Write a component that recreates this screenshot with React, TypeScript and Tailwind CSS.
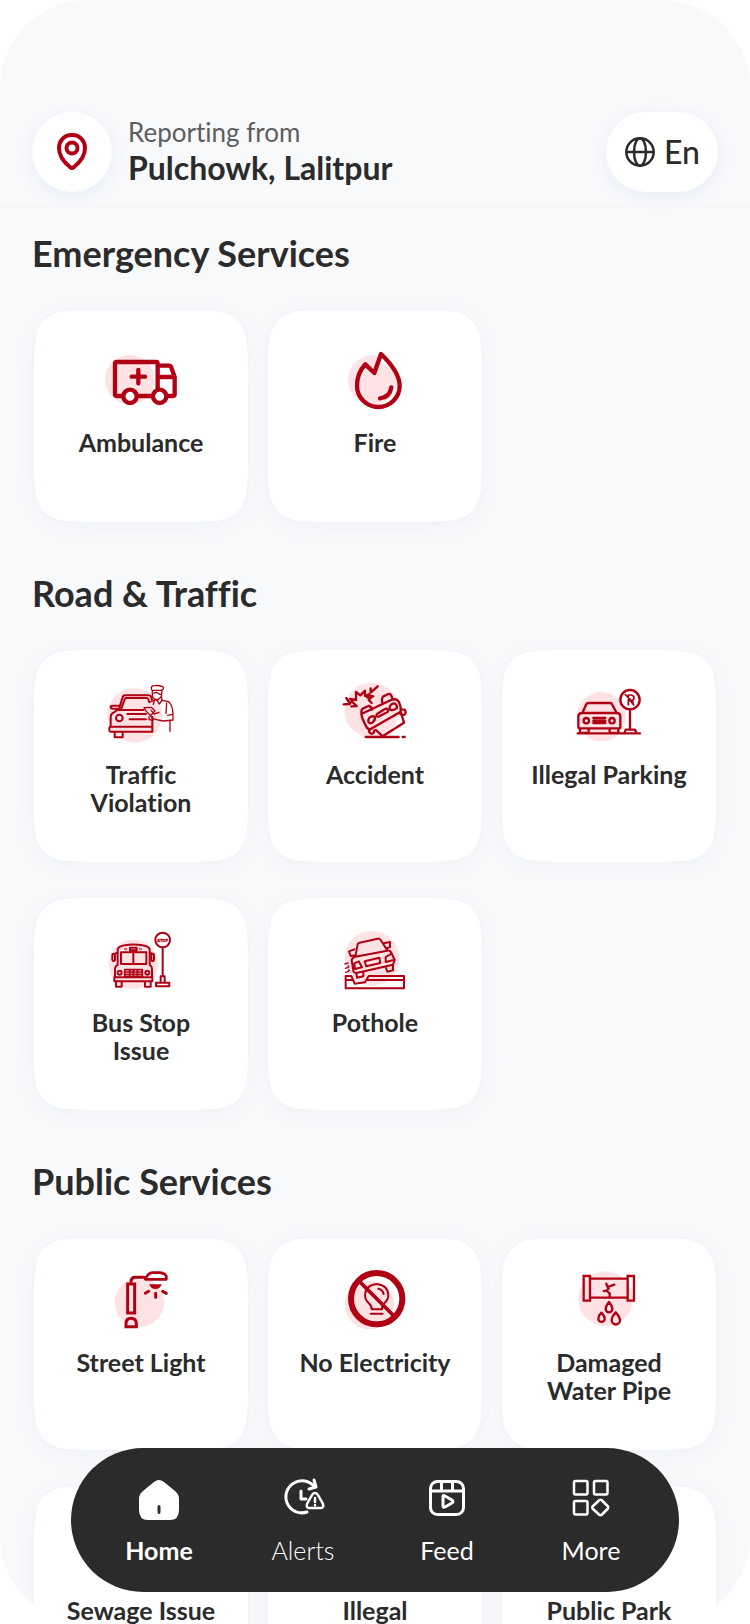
import React from 'react';
import { Droplets, Trash2, Trees } from 'lucide-react';

interface IconProps {
  viewBox: string;
  circle: [number, number, number];
  large?: boolean;
  width?: number;
  children: React.ReactNode;
}

const ServiceIcon: React.FC<IconProps> = ({ viewBox, circle, large, width = 7, children }) => (
  <svg
    viewBox={viewBox}
    className={large ? 'size-[72px] overflow-visible' : 'size-16 overflow-visible'}
    fill="none"
    stroke="#b00014"
    strokeWidth={width}
    strokeLinecap="round"
    strokeLinejoin="round"
    aria-hidden="true"
  >
    <circle cx={circle[0]} cy={circle[1]} r={circle[2]} fill="#ffe2e4" stroke="none" />
    {children}
  </svg>
);

const AmbulanceIcon = () => (
  <ServiceIcon viewBox="255 132 216 216" circle={[329, 239, 74]} large width={13}>
    <path d="M306 288H290Q285 288 285 283V191Q285 186 290 186H408Q413 186 413 191V268M350 288H397M440 288H459Q464 288 464 283V231L453 200Q451 197 447 197H413M413 231H464M355 210V250M335 230H375" />
    <circle cx="330" cy="289" r="20" fill="#fff" />
    <circle cx="419" cy="289" r="20" fill="#fff" />
  </ServiceIcon>
);

const FireIcon = () => (
  <ServiceIcon viewBox="957 132 216 216" circle={[1058, 240, 74]} large width={13}>
    <path d="M1083 162L1063 219L1036 193C1024 206 1011 228 1011 257A64 64 0 0 0 1139 257C1139 225 1112 190 1083 162Z" fill="#fff" stroke="none" />
    <path d="M1063 219L1036 193C1024 206 1011 228 1011 257A64 64 0 0 0 1060 314A74 74 0 0 0 1132 240Q1128 200 1072 187Z" fill="#ffe2e4" stroke="none" />
    <path d="M1083 162L1063 219L1036 193C1024 206 1011 228 1011 257A64 64 0 0 0 1139 257C1139 225 1112 190 1083 162Z" />
    <path d="M1114 262C1111 280 1099 293 1080 295" />
  </ServiceIcon>
);

const TrafficIcon = () => (
  <ServiceIcon viewBox="57 42 192 192" circle={[134, 136, 82]} width={6}>
    <path d="M86 119L99 79Q101 76 106 76H176Q182 76 184 82L186 90M93 118L105 86Q106 84 110 84H170Q174 84 176 90L178 97M82 120H161M82 120L66 131Q62 134 62 141V169M81 116H68Q62 116 62 111Q62 107 68 107H86M112 132H168M119 148H168M187 140V184M62 170H187M62 170Q58 170 58 175V181Q58 185 63 185H187M74 187V202H98V187" />
    <circle cx="88" cy="144" r="10" />
    <g strokeWidth="4">
      <path d="M162 113L184 112L195 123L181 137L168 123ZM183 121L193 132L207 127M181 137Q187 147 199 149L220 153L249 150V132Q248 105 236 95L217 91M180 96L204 87M230 99L228 130M233 136L249 133M177 140V149L189 151M240 152V184" />
      <path d="M184 53Q184 48 193 47Q206 45 218 50Q222 52 220 57L215 61H187Q184 60 184 53ZM187 61V78Q188 84 192 86L202 92L214 79L216 61M192 69L201 67L208 73L213 73M202 92L208 102L216 91L214 79M194 87L190 103" />
    </g>
  </ServiceIcon>
);

const AccidentIcon = () => (
  <ServiceIcon viewBox="69 42 192 192" circle={[155, 121, 82]}>
    <path d="M71 103L88 102M79 84L90 101M88 102L98 92L90 87L108 90L108 66L121 76L135 62L135 78L147 73M94 109L110 108L99 98M152 55V68L173 49M141 82L156 80L146 90L155 99M150 77L160 79" />
    <path d="M124 132L213 90Q229 83 237 96Q244 111 242 125L152 177Q143 180 136 164L128 147Q125 138 124 132ZM125 132Q122 118 130 115L145 108Q152 107 156 119M188 101Q183 85 190 79L205 72Q213 69 218 87M243 118L254 119Q259 126 255 132Q250 138 241 132M242 125L252 158L188 199L168 180M154 176Q145 180 148 187Q155 195 161 188L163 181" />
    <path d="M148 143Q157 136 165 141Q166 151 158 157Q151 163 146 157Q143 149 148 143ZM172 131L195 117Q201 114 203 119Q206 124 201 127L178 139Q172 141 170 137Q168 134 172 131ZM209 112Q211 101 223 100Q232 105 231 114Q221 123 211 119Q208 117 209 112ZM137 201H236M248 201H254" />
  </ServiceIcon>
);

const ParkingIcon = () => (
  <ServiceIcon viewBox="51 42 192 192" circle={[124, 140, 74]}>
    <path d="M53 190H240M67 129L78 104Q81 99 86 99H150Q155 99 157 104L170 129M55 140Q55 129 67 129H170Q181 129 181 140V170Q181 175 176 175H60Q55 175 55 170ZM60 177V189H86V177M149 177V189H175V177M100 144H136M100 152H136M100 159H136M210 118V176M194 188L197 179H225L229 188" />
    <circle cx="79" cy="152" r="8" />
    <circle cx="156" cy="152" r="8" />
    <circle cx="210" cy="89" r="29" fill="#fff" />
    <path strokeWidth="5" d="M205 105V75H213Q222 76 222 84Q222 91 213 92H205M212 93L221 105M196 74L220 98" />
  </ServiceIcon>
);

const BusIcon = () => (
  <ServiceIcon viewBox="57 36 192 192" circle={[130, 133, 74]} width={6}>
    <path d="M83 135V88Q86 79 104 76Q130 71 157 76Q176 79 179 88V135M93 132V97H169V132ZM130 98V130M83 135Q75 137 75 150V171M179 135Q186 137 186 150V171M73 172H187V184H73ZM78 187V200H95V187M165 187V200H182V187M83 98L75 101M179 98L187 101M120 83H140V91H120Z" />
    <rect x="67" y="101" width="8" height="22" rx="4" />
    <rect x="184" y="101" width="8" height="22" rx="4" />
    <circle cx="89" cy="158" r="6" />
    <circle cx="172" cy="158" r="6" />
    <circle cx="107" cy="87" r="1" />
    <circle cx="151" cy="87" r="1" />
    <path strokeWidth="5" d="M104 149H157V170H104ZM106 156H156M106 163H156M119 150V169M130 150V169M142 150V169" />
    <path d="M218 83V166M212 185V169H224V185M198 188H238V199H198Z" />
    <circle cx="218" cy="60" r="22" fill="#fff" />
    <text x="218" y="65" textAnchor="middle" fontSize="12" fontWeight="700" fill="#b00014" stroke="#b00014" strokeWidth="1" fontFamily="Liberation Sans, sans-serif">STOP</text>
  </ServiceIcon>
);

const PotholeIcon = () => (
  <ServiceIcon viewBox="69 36 192 192" circle={[156, 115, 82]} width={6}>
    <path d="M106 110L113 73Q114 69 119 68L173 56Q178 55 182 60L202 91M95 120Q97 112 106 110L202 92Q210 91 213 96L224 120L219 134L109 159Q102 160 100 153ZM103 88L87 94L92 108L106 106M191 70L210 66V81L200 85M134 124L178 113L181 129L139 139ZM103 130L116 124L126 142L105 147ZM211 103L197 111L197 126L218 121M109 159L111 173L130 169L130 157M197 141L202 155L219 151V135" />
    <path d="M78 168H94L104 191L135 187L146 168H252V205H77V168M78 180H98M141 180H250" />
    <path strokeWidth="4" d="M75 132L84 129M76 145L85 142M77 157L86 154M84 138L87 139M85 150L88 151" />
  </ServiceIcon>
);

const StreetLightIcon = () => (
  <ServiceIcon viewBox="57 51 192 192" circle={[148, 142, 74]}>
    <path strokeLinejoin="miter" strokeWidth="9" d="M113 87H134V174H113Z" />
    <path strokeWidth="9" d="M123 80Q124 67 135 67H162" />
    <path strokeWidth="8" d="M166 72Q174 54 187 53H210Q225 55 229 64V73H166Z" fill="#fff" />
    <path strokeWidth="9" strokeLinejoin="miter" d="M108 215V205Q109 190 123 190Q138 190 139 205V215Z" />
    <path d="M178 88H215Q211 102 196 102Q182 102 178 88Z" fill="#b00014" stroke="none" />
    <path strokeWidth="9" d="M197 115V127M176 109L166 115M218 109L229 115" />
  </ServiceIcon>
);

const NoElectricityIcon = () => (
  <ServiceIcon viewBox="759 51 192 192" circle={[838, 149, 74]} width={6}>
    <circle cx="860" cy="131" r="77" fill="#fff" stroke="none" />
    <path d="M783 112A74 74 0 0 0 838 222A74 74 0 0 0 911 135A74 74 0 0 0 880 88L838 75Z" fill="#ffe2e4" stroke="none" />
    <path d="M845 163Q846 153 836 144Q825 134 825 120Q827 90 860 87Q893 90 895 120Q895 134 883 145Q875 153 876 163ZM842 176H878M865 101Q878 104 881 117" />
    <path strokeWidth="11" d="M808 79L912 183" />
    <circle cx="860" cy="131" r="77" strokeWidth="18" />
  </ServiceIcon>
);

const PipeIcon = () => (
  <ServiceIcon viewBox="51 51 192 192" circle={[137, 131, 82]}>
    <path strokeLinejoin="miter" d="M71 63H90V137H71ZM203 63H222V137H203ZM92 71H201M92 128H201" />
    <path d="M139 86L143 96L163 89M143 96L146 101L139 107L132 108M139 107L149 115V127" />
    <path d="M147 141Q137 153 137 162A10 10 0 0 0 157 162Q157 153 147 141ZM124 173Q115 182 115 191A9 9 0 0 0 134 191Q134 182 124 173ZM167 172Q155 186 155 196A12 12 0 0 0 180 196Q180 186 167 172Z" />
  </ServiceIcon>
);

const sections = [
  {
    title: 'Emergency Services',
    items: [
      { label: 'Ambulance', icon: <AmbulanceIcon /> },
      { label: 'Fire', icon: <FireIcon /> }
    ]
  },
  {
    title: 'Road & Traffic',
    items: [
      { label: 'Traffic Violation', icon: <TrafficIcon /> },
      { label: 'Accident', icon: <AccidentIcon /> },
      { label: 'Illegal Parking', icon: <ParkingIcon /> },
      { label: 'Bus Stop Issue', icon: <BusIcon /> },
      { label: 'Pothole', icon: <PotholeIcon /> }
    ]
  },
  {
    title: 'Public Services',
    items: [
      { label: 'Street Light', icon: <StreetLightIcon /> },
      { label: 'No Electricity', icon: <NoElectricityIcon /> },
      { label: 'Damaged Water Pipe', icon: <PipeIcon /> },
      { label: 'Sewage Issue', icon: <Droplets className="size-16 text-[#b00014]" /> },
      { label: 'Illegal', icon: <Trash2 className="size-16 text-[#b00014]" /> },
      { label: 'Public Park', icon: <Trees className="size-16 text-[#b00014]" /> }
    ]
  }
];

const navItems = [
  {
    label: 'Home',
    weight: 'font-bold',
    icon: (
      <path
        fill="#fff"
        fillRule="evenodd"
        stroke="none"
        d="M15 4Q20 0 25 4L36 13Q40 16 40 21V32Q40 42 31 42H9Q0 42 0 32V21Q0 16 4 13ZM20 27Q18.500 27 18.500 29V34Q18.500 36 20 36Q21.500 36 21.500 34V29Q21.500 27 20 27Z"
      />
    )
  },
  {
    label: 'Alerts',
    weight: 'font-light',
    icon: (
      <>
        <path d="M24 34A16 16 0 1 1 31.500 9M31 2L33 9L26 11M18 13V21H23" />
        <path strokeWidth="2.500" d="M32 15Q34 15 35 17L40 26Q41 30 38 30H26Q23 30 24 26L29 17Q30 15 32 15ZM32 20V24M32 27V27.200" />
      </>
    )
  },
  {
    label: 'Feed',
    weight: 'font-normal',
    icon: (
      <>
        <rect x="3.500" y="3.500" width="33" height="33" rx="7" />
        <path d="M4 13H36M14.500 4V13M25.500 4V13M16 18Q16 17 18 18L25 22Q27 24 25 25L18 29Q16 30 16 28Z" />
      </>
    )
  },
  {
    label: 'More',
    weight: 'font-normal',
    icon: (
      <g strokeWidth="2.500">
        <rect x="3" y="3" width="13.500" height="13.500" rx="1.500" />
        <rect x="23" y="3" width="13.500" height="13.500" rx="1.500" />
        <rect x="3" y="23" width="13.500" height="13.500" rx="1.500" />
        <path d="M28.500 22L21.500 28.500Q21 29.500 21.500 30.500L28.500 37Q29.500 37.500 30.500 37L37 30.500Q37.500 29.500 37 28.500L30.500 22Q29.500 21.500 28.500 22Z" />
      </g>
    )
  }
];

export default function App() {
  return (
    <div className="h-screen bg-white font-['Lato','Open_Sans',sans-serif] text-[#2b2b2b] [font-variant-ligatures:none]">
      <div className="relative flex h-full flex-col overflow-hidden rounded-[88px] bg-[#f8f9fb]">
        <header className="flex shrink-0 items-center justify-between border-b-2 border-[#f5f6f7] px-8 pt-28 pb-[14px]">
          <div className="flex items-center gap-4">
            <button aria-label="Change location" className="flex size-20 items-center justify-center rounded-full bg-white shadow-[0_4px_16px_#e8ecfa]">
              <svg viewBox="0 0 32 40" className="h-10 w-8" fill="none" stroke="#b00014" strokeWidth="4" strokeLinejoin="round" aria-hidden="true">
                <path d="M16 3C8 3 3 9 3 16C3 24 9 31 14 35Q16 37 18 35C23 31 29 24 29 16C29 9 24 3 16 3Z" />
                <circle cx="16" cy="16" r="5.500" />
              </svg>
            </button>
            <div>
              <p className="text-[26px] leading-8 text-[#5d5d5d]">Reporting from</p>
              <p className="text-[32px] leading-10 font-bold">Pulchowk, Lalitpur</p>
            </div>
          </div>
          <button className="flex h-20 items-center gap-2 rounded-full bg-white px-[18px] text-[32px] font-medium shadow-[0_4px_16px_#e8ecfa]">
            <svg viewBox="0 0 32 32" className="size-8" fill="none" stroke="#2b2b2b" strokeWidth="2.500" aria-hidden="true">
              <circle cx="16" cy="16" r="13.700" />
              <ellipse cx="16" cy="16" rx="6" ry="13.700" />
              <path d="M2.500 16H29.500" />
            </svg>
            En
          </button>
        </header>

        <main className="flex-1 overflow-y-auto px-8 [scrollbar-width:none]">
          {sections.map((section) => (
            <section key={section.title} className="pt-6 pb-[26px]">
              <h2 className="text-4xl leading-[42px] font-bold">{section.title}</h2>
              <div className="grid grid-cols-3 gap-x-5 gap-y-9 px-[2px] pt-9">
                {section.items.map((item) => (
                  <button
                    key={item.label}
                    className="flex h-[212px] flex-col items-center gap-3 rounded-[64px] bg-white px-7 pt-[34px] shadow-[0_4px_20px_#eff2f6,0_0_2px_#e6edf5] [corner-shape:squircle]"
                  >
                    {item.icon}
                    <span className="text-[25px] leading-7 font-bold">{item.label}</span>
                  </button>
                ))}
              </div>
            </section>
          ))}
        </main>

        <nav className="absolute inset-x-[71px] bottom-8 flex h-36 rounded-full bg-[#2b2b2b] px-4 text-white">
          {navItems.map((item) => (
            <a key={item.label} href="#" className="flex flex-1 flex-col items-center gap-4 pt-[30px]">
              <svg viewBox="0 0 40 40" className="size-10 overflow-visible" fill="none" stroke="#fff" strokeWidth="3" strokeLinecap="round" strokeLinejoin="round" aria-hidden="true">
                {item.icon}
              </svg>
              <span className={`text-[25px] leading-8 ${item.weight}`}>{item.label}</span>
            </a>
          ))}
        </nav>
      </div>
    </div>
  );
}
